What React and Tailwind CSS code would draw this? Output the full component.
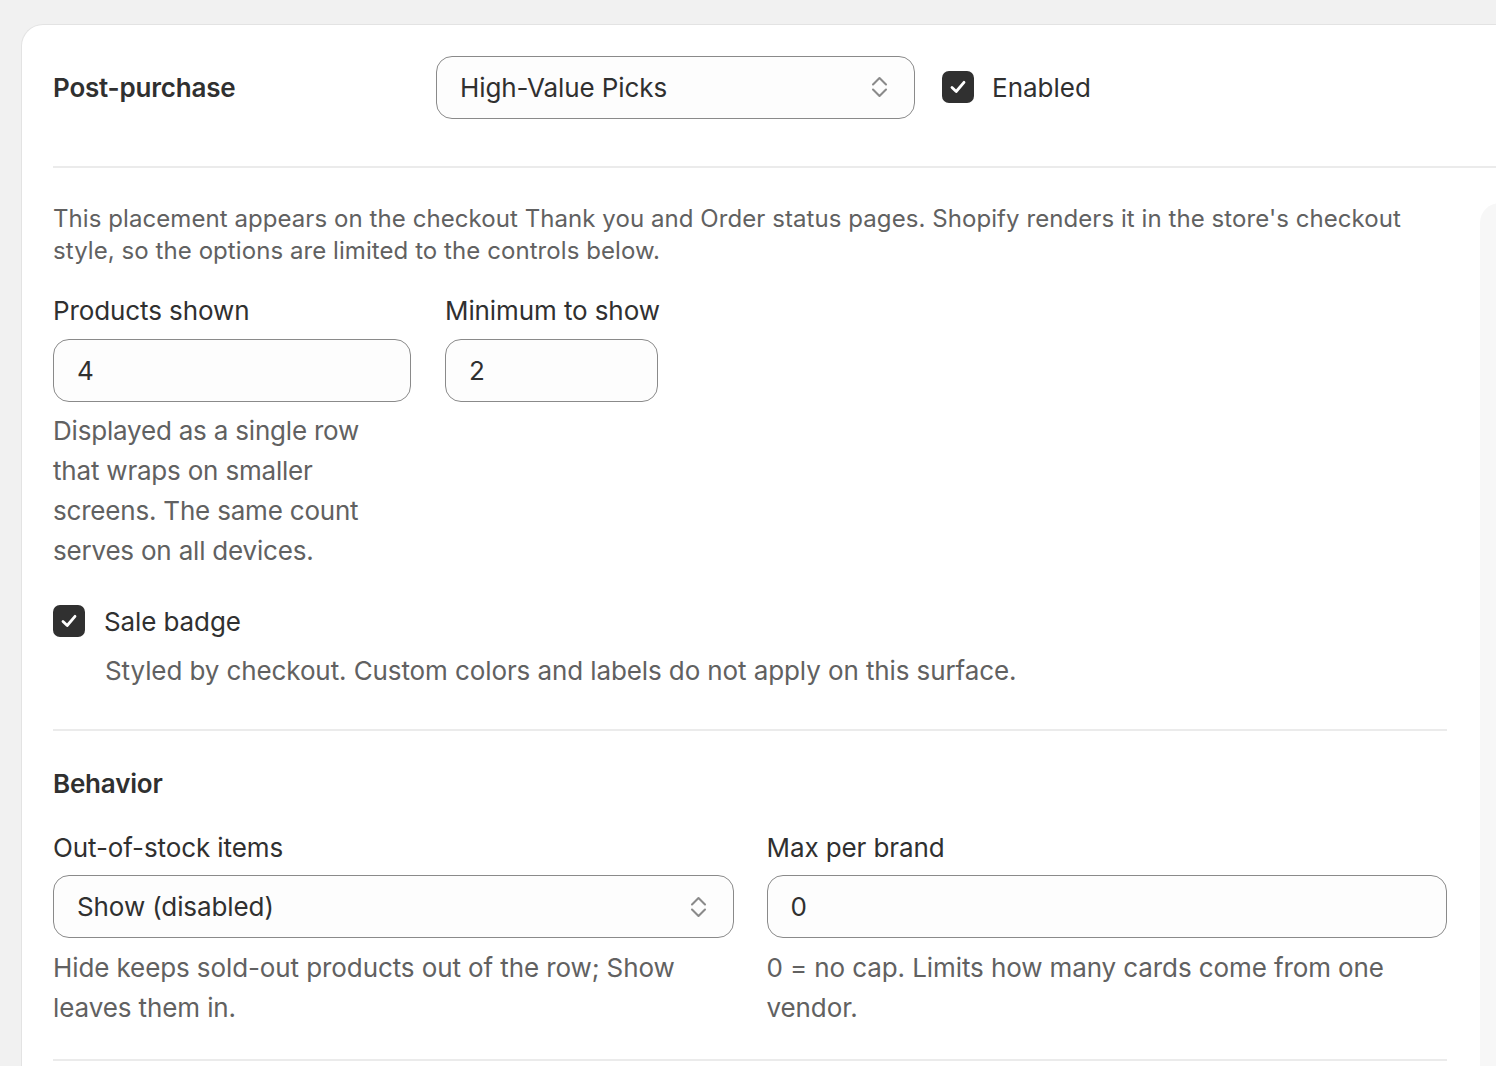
import React from "react";

const FONT = { fontFamily: "Inter, 'Noto Sans', 'Liberation Sans', sans-serif" };

function SelectChevron() {
  return (
    <svg width="17" height="26" viewBox="0 0 17 26" fill="none" stroke="#8a8a8a" strokeWidth="2.1" strokeLinecap="round" strokeLinejoin="round">
      <path d="M2 10.5 L8.5 4 L15 10.5" />
      <path d="M2 15.5 L8.5 22 L15 15.5" />
    </svg>
  );
}

function Checkbox() {
  return (
    <div className="w-[32px] h-[32px] rounded-[7px] bg-[#303030] flex items-center justify-center shrink-0">
      <svg width="22" height="22" viewBox="0 0 22 22" fill="none" stroke="white" strokeWidth="2.8" strokeLinecap="round" strokeLinejoin="round">
        <path d="M5 11.5 L9.2 15.5 L17 6.3" />
      </svg>
    </div>
  );
}

function Select({ value, className }) {
  return (
    <div className={"h-[63px] rounded-[16px] border border-[#8a8a8a] bg-[#fdfdfd] flex items-center justify-between pl-[23px] pr-[26px] " + className}>
      <span className="text-[26px] text-[#303030] tracking-[-0.1px]">{value}</span>
      <SelectChevron />
    </div>
  );
}

function Input({ value, className }) {
  return (
    <div className={"h-[63px] rounded-[16px] border border-[#8a8a8a] bg-[#fdfdfd] flex items-center pl-[23px] " + className}>
      <span className="text-[26px] text-[#303030]">{value}</span>
    </div>
  );
}

export default function App() {
  return (
    <div className="min-h-screen h-[1066px] bg-[#f1f1f1] overflow-hidden pt-[24px] pl-[21px]" style={FONT}>
      <div className="w-[1700px] h-[1200px] bg-white rounded-tl-[22px] border-l border-t border-[#e3e3e3]">
        <div className="pl-[31px] pt-[30px]">
          <div className="flex items-center h-[64px]">
            <div className="w-[383px] text-[26px] font-semibold text-[#303030] tracking-[-0.2px]">Post-purchase</div>
            <Select value="High-Value Picks" className="w-[479px]" />
            <div className="ml-[27px] flex items-center gap-[18px]">
              <Checkbox />
              <span className="text-[26px] text-[#303030]">Enabled</span>
            </div>
          </div>
          <div className="mt-[47px] h-[2px] bg-[#ebebeb]" />
        </div>
        <div className="flex gap-[33px] pl-[31px] pt-[35px]">
          <div className="w-[1394px] shrink-0">
            <p className="text-[24px] leading-[32px] text-[#616161] tracking-[0.07px]">
              This placement appears on the checkout Thank you and Order status pages. Shopify renders it in the store's checkout style, so the options are limited to the controls below.
            </p>
            <div className="mt-[24px] flex gap-[34px]">
              <div className="w-[358px]">
                <div className="text-[26px] leading-[40px] text-[#303030] whitespace-nowrap tracking-[-0.1px]">Products shown</div>
                <Input value="4" className="mt-[8px]" />
                <p className="mt-[9px] text-[26px] leading-[40px] text-[#616161] tracking-[-0.2px]">
                  Displayed as a single row that wraps on smaller screens. The same count serves on all devices.
                </p>
              </div>
              <div className="w-[213px]">
                <div className="text-[26px] leading-[40px] text-[#303030] whitespace-nowrap tracking-[-0.1px]">Minimum to show</div>
                <Input value="2" className="mt-[8px]" />
              </div>
            </div>
            <div className="mt-[30px]">
              <div className="flex items-center gap-[19px] h-[40px]">
                <Checkbox />
                <span className="text-[26px] text-[#303030] tracking-[-0.1px]">Sale badge</span>
              </div>
              <p className="mt-[10px] pl-[52px] text-[26px] leading-[40px] text-[#616161] tracking-[-0.1px]">
                Styled by checkout. Custom colors and labels do not apply on this surface.
              </p>
            </div>
            <div className="mt-[38px] h-[2px] bg-[#ebebeb]" />
            <div className="mt-[33px] text-[26px] leading-[40px] font-semibold text-[#303030] tracking-[-0.2px]">Behavior</div>
            <div className="mt-[24px] grid grid-cols-2 gap-x-[33px]">
              <div>
                <div className="text-[26px] leading-[40px] text-[#303030] tracking-[-0.1px]">Out-of-stock items</div>
                <Select value="Show (disabled)" className="mt-[7px]" />
                <p className="mt-[10px] text-[26px] leading-[40px] text-[#616161] tracking-[-0.1px]">
                  Hide keeps sold-out products out of the row; Show leaves them in.
                </p>
              </div>
              <div>
                <div className="text-[26px] leading-[40px] text-[#303030] tracking-[-0.1px]">Max per brand</div>
                <Input value="0" className="mt-[7px]" />
                <p className="mt-[10px] text-[26px] leading-[40px] text-[#616161] tracking-[-0.1px]">
                  0 = no cap. Limits how many cards come from one vendor.
                </p>
              </div>
            </div>
            <div className="mt-[31px] h-[2px] bg-[#ebebeb]" />
          </div>
          <div className="flex-1 bg-[#f7f7f7] rounded-tl-[20px] h-[1000px]" />
        </div>
      </div>
    </div>
  );
}
